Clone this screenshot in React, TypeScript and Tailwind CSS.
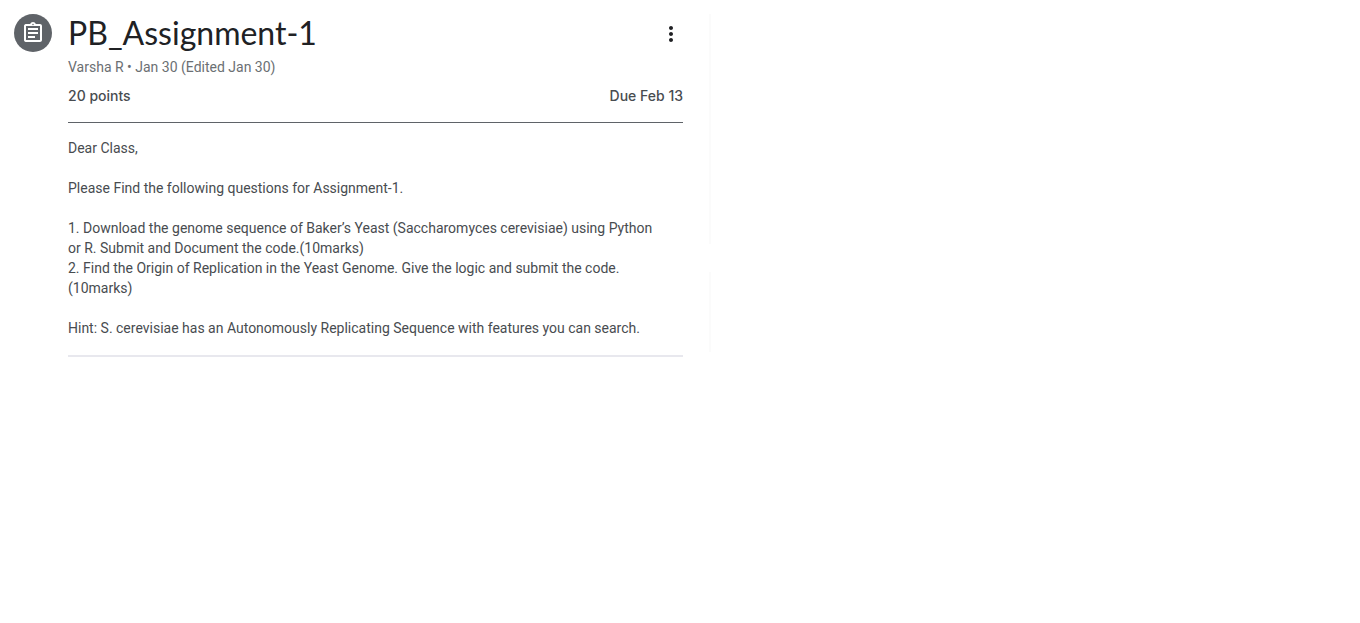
import { MdMoreVert, MdOutlineAssignment } from "react-icons/md";

const instructions = [
  ["Dear Class,"],
  ["Please Find the following questions for Assignment-1."],
  [
    "1. Download the genome sequence of Baker’s Yeast (Saccharomyces cerevisiae) using Python",
    "or R. Submit and Document the code.(10marks)",
    "2. Find the Origin of Replication in the Yeast Genome. Give the logic and submit the code.",
    "(10marks)",
  ],
  ["Hint: S. cerevisiae has an Autonomously Replicating Sequence with features you can search."],
];

function AssignmentHeader() {
  return (
    <header className="border-b border-[#5f6368] pb-4">
      <div className="flex items-start justify-between">
        <h1 className="font-[Lato,sans-serif] text-[32px] leading-[38px] text-[#202124]">
          PB_Assignment-1
        </h1>
        <button
          type="button"
          aria-label="Assignment options"
          className="flex h-10 w-6 items-center justify-center text-[#202124]"
        >
          <MdMoreVert className="size-6" />
        </button>
      </div>
      <p className="mt-[3px] text-sm leading-5 text-[#6b6f73]">Varsha R • Jan 30 (Edited Jan 30)</p>
      <div className="mt-[9px] flex justify-between font-[Inter,sans-serif] text-sm leading-5 font-medium text-[#484c50]">
        <span>20 points</span>
        <span>Due Feb 13</span>
      </div>
    </header>
  );
}

export default function App() {
  return (
    <div className="flex min-h-screen gap-[26px] bg-white pt-3.5 pl-3.5 font-[Roboto,sans-serif]">
      <main className="flex w-full max-w-[669px] items-start gap-4">
        <div className="flex size-[38px] shrink-0 items-center justify-center rounded-full bg-[#5f6368] text-white">
          <MdOutlineAssignment className="size-6" />
        </div>
        <article className="min-w-0 flex-1">
          <AssignmentHeader />
          <div className="flex flex-col gap-5 border-b-2 border-[#e8e8ee] pt-[15px] pb-[17px] text-sm leading-5 text-[#484c50]">
            {instructions.map((lines) => (
              <p key={lines[0]} className="whitespace-pre-line">
                {lines.join("\n")}
              </p>
            ))}
          </div>
        </article>
      </main>
      <aside className="flex flex-1 flex-col gap-7">
        <div className="h-[230px] border-l-2 border-[#fbfbfb]" />
        <div className="h-20 border-l-2 border-[#fbfbfb]" />
      </aside>
    </div>
  );
}
